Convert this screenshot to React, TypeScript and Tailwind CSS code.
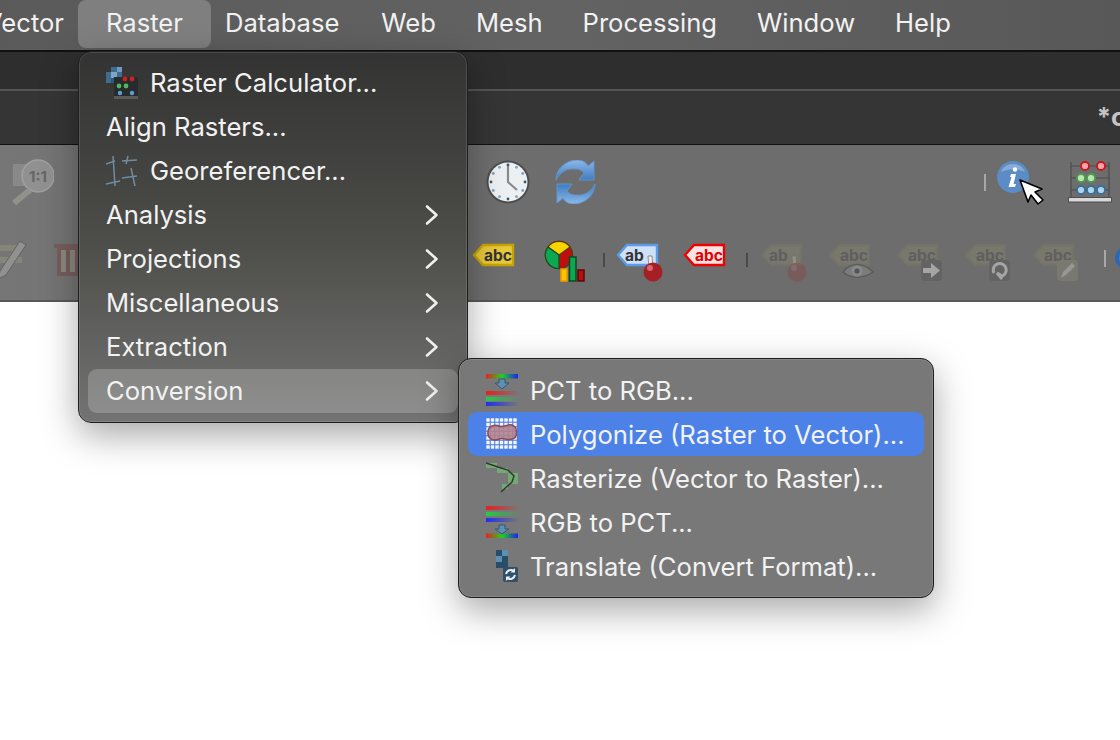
const font = { fontFamily: "Inter, sans-serif" };

const Chevron = () => (
  <svg width="14" height="22" viewBox="0 0 14 22" fill="none" className="shrink-0">
    <path d="M2 2.5 L11.5 11 L2 19.5" stroke="#f0f0f0" strokeWidth="2.6" strokeLinecap="round" strokeLinejoin="round" />
  </svg>
);

const CalcIcon = () => (
  <svg width="32" height="32" viewBox="0 0 32 32">
    <rect x="0" y="5" width="5" height="11" fill="#3f6c8f" />
    <rect x="5" y="0" width="6" height="5" fill="#3f6c8f" />
    <rect x="11" y="0" width="5" height="5" fill="#6f9cbc" />
    <rect x="5" y="5" width="6" height="6" fill="#7ba6c4" />
    <rect x="11" y="5" width="5" height="6" fill="#3f6c8f" />
    <rect x="5" y="11" width="6" height="5" fill="#2f5875" />
    <rect x="8" y="10" width="24" height="22" fill="#262b2d" />
    <rect x="8" y="29" width="24" height="3" fill="#5a5a5a" />
    <circle cx="19" cy="12" r="2.4" fill="#d11f22" />
    <circle cx="26" cy="12" r="2.4" fill="#d11f22" />
    <circle cx="13" cy="19" r="2.4" fill="#58b35a" />
    <circle cx="20" cy="19" r="2.4" fill="#58b35a" />
    <circle cx="14" cy="26" r="2.2" fill="#5c9fd6" />
    <circle cx="26" cy="26" r="2.2" fill="#5c9fd6" />
  </svg>
);

const GeorefIcon = () => (
  <svg width="32" height="32" viewBox="0 0 32 32" fill="none" stroke="#6f8da0" strokeWidth="1.5">
    <path d="M7 1 L9 31" />
    <path d="M22 1 L20 9 M25 13 L29 31" />
    <path d="M0 9 L9 6 M16 6 L31 5" />
    <path d="M0 29 L14 26 M16 23 L31 21" />
  </svg>
);

const PctIcon = ({ flip }: { flip?: boolean }) => (
  <svg width="32" height="32" viewBox="0 0 32 32">
    <defs>
      <linearGradient id="rainbow">
        <stop offset="0" stopColor="#e82020" />
        <stop offset="0.5" stopColor="#20d020" />
        <stop offset="1" stopColor="#2020f0" />
      </linearGradient>
      <linearGradient id="r"><stop offset="0" stopColor="#e82020" /><stop offset="1" stopColor="#e02020" stopOpacity="0.05" /></linearGradient>
      <linearGradient id="g"><stop offset="0" stopColor="#20d040" /><stop offset="1" stopColor="#20c040" stopOpacity="0.05" /></linearGradient>
      <linearGradient id="b"><stop offset="0" stopColor="#2030f0" /><stop offset="1" stopColor="#2030e0" stopOpacity="0.05" /></linearGradient>
    </defs>
    <rect x="0" y={flip ? 27.5 : 0} width="32" height="4.5" fill="url(#rainbow)" />
    <path
      d={flip ? "M13 19 H19 V23 H23 L16 28 L9 23 H13 Z" : "M13 5 H19 V9 H23 L16 15 L9 9 H13 Z"}
      fill="#5f8fb5"
      stroke="#34566f"
      strokeWidth="1"
    />
    <rect x="0" y={flip ? 0 : 17} width="32" height="4" fill="url(#r)" />
    <rect x="0" y={flip ? 6 : 23} width="32" height="4" fill="url(#g)" />
    <rect x="0" y={flip ? 12 : 28} width="32" height="4" fill="url(#b)" />
  </svg>
);

const PolygonizeIcon = () => (
  <svg width="32" height="32" viewBox="0 0 32 32">
    {Array.from({ length: 49 }).map((_, i) => (
      <rect key={i} x={(i % 7) * 4.5 + 0.3} y={Math.floor(i / 7) * 4.5 + 0.3} width="3.4" height="3.4" fill="#f4f6fb" />
    ))}
    <path d="M2 14 C2 8 9 6 13 8 C18 10 20 6 26 7 C32 9 32 20 26 21 C20 23 18 19 13 21 C7 24 1 20 2 14 Z" fill="#b0808a" fillOpacity="0.88" stroke="#8c4b55" strokeWidth="1.5" />
  </svg>
);

const RasterizeIcon = () => (
  <svg width="32" height="32" viewBox="0 0 32 32">
    <rect x="0" y="1" width="11" height="5" fill="#74a874" />
    <rect x="11" y="6" width="11" height="5" fill="#74a874" />
    <rect x="22" y="11" width="10" height="11" fill="#74a874" />
    <rect x="16" y="22" width="6" height="5" fill="#74a874" />
    <path d="M0 1 L12 5 L22 8 L28 14 L26 20 L15 30" fill="none" stroke="#2c3a2c" strokeWidth="1.4" />
  </svg>
);

const TranslateIcon = () => (
  <svg width="32" height="32" viewBox="0 0 32 32">
    <rect x="10" y="0" width="6" height="6" fill="#294d68" />
    <rect x="16" y="0" width="6" height="6" fill="#5f8fb0" />
    <rect x="10" y="6" width="6" height="6" fill="#5f8fb0" />
    <rect x="16" y="6" width="6" height="6" fill="#294d68" />
    <rect x="10" y="12" width="6" height="6" fill="#294d68" />
    <rect x="16" y="12" width="6" height="6" fill="#294d68" />
    <rect x="17" y="17" width="15" height="15" rx="2" fill="#2f5068" />
    <path d="M20 24 A5 5 0 0 1 28 21 M29 25 A5 5 0 0 1 21 28" stroke="#e8eef2" strokeWidth="2" fill="none" />
    <path d="M29 18 V22.5 H24.5 Z M20 31 V26.5 H24.5 Z" fill="#e8eef2" />
  </svg>
);

const LabelIcon = ({ text = "abc", w = 40, fill = "#8a8a78", border = "#7a7a6a", color = "#5a5a58", children }: { text?: string; w?: number; fill?: string; border?: string; color?: string; children?: React.ReactNode }) => (
  <svg width={w + 2} height="42" viewBox={`0 0 ${w + 2} 42`} className="overflow-visible">
    <path d={`M1 13 L10 3 H${w} V23 H10 Z`} fill={fill} stroke={border} strokeWidth="2.4" />
    <text x={text === "ab" ? 8 : (w + 10) / 2} y="18.5" fontSize="15.5" fontWeight="700" textAnchor={text === "ab" ? "start" : "middle"} fill={color} fontFamily="Inter, sans-serif">{text}</text>
    {children}
  </svg>
);

const Clock = () => (
  <svg width="44" height="44" viewBox="0 0 44 44">
    <circle cx="22" cy="22" r="21.5" fill="#4d4d4d" />
    <circle cx="22" cy="22" r="19.5" fill="#edf0f3" />
    {Array.from({ length: 12 }).map((_, i) => {
      const a = (i * Math.PI) / 6;
      return <circle key={i} cx={22 + 17 * Math.sin(a)} cy={22 - 17 * Math.cos(a)} r="1.4" fill={i % 3 === 0 ? "#39566f" : "#7aa0c4"} />;
    })}
    <path d="M22 6 V22 L31 30" fill="none" stroke="#8a8a8a" strokeWidth="2.2" />
  </svg>
);

const Refresh = () => {
  const arrow = "M1 20 C1 8 12 0 22 0 C27 0 31 2 33 6 L39 1 V20 H24 L29 13 C25 8 20 9 15 9 C9 10 4 14 1 20 Z";
  return (
    <svg width="42" height="44" viewBox="0 0 42 44">
      <defs>
        <linearGradient id="bl" x1="0" y1="0" x2="0" y2="1">
          <stop offset="0" stopColor="#8db8e6" />
          <stop offset="1" stopColor="#3f7cc0" />
        </linearGradient>
      </defs>
      <path d={arrow} fill="url(#bl)" stroke="#5e94d0" />
      <path d={arrow} transform="rotate(180 20.5 22)" fill="url(#bl)" stroke="#5e94d0" />
    </svg>
  );
};

const Zoom11 = () => (
  <svg width="44" height="46" viewBox="0 0 44 46" className="opacity-60">
    <rect x="3" y="5" width="24" height="22" fill="#969696" />
    <circle cx="28" cy="17" r="16" fill="#a3a3a3" stroke="#bdbdbd" strokeWidth="1.5" />
    <text x="28" y="22.5" fontSize="15" fontWeight="700" textAnchor="middle" fill="#5d5d5d" fontFamily="Inter, sans-serif">1:1</text>
    <path d="M20 31 L4 44" stroke="#a6a69c" strokeWidth="6" />
  </svg>
);

const Info = () => (
  <svg width="34" height="34" viewBox="0 0 34 34">
    <circle cx="17" cy="17" r="16" fill="#5c8cc6" />
    <path d="M5 12 A13 13 0 0 1 29 12 C20 8 12 9 5 12 Z" fill="#88acd9" />
    <circle cx="19" cy="9.5" r="2.2" fill="#fff" />
    <path d="M15 14 H20 L17.5 24 H20 L19 27 H12.5 L15.5 17 H14 Z" fill="#fff" />
  </svg>
);

const Abacus = () => (
  <svg width="44" height="42" viewBox="0 0 44 42">
    <path d="M3 1 V38 M41 1 V38" stroke="#4d4d4d" strokeWidth="1.2" />
    <path d="M3 5 H41 M3 17 H41 M3 29 H41" stroke="#4d4d4d" strokeWidth="1.2" />
    <rect x="0.5" y="36.5" width="43" height="4.5" fill="#d8d8d8" stroke="#4d4d4d" />
    {[17, 33].map((x) => <circle key={x} cx={x} cy="5" r="4" fill="#f4a3a6" stroke="#c8161c" strokeWidth="1.8" />)}
    {[13, 23].map((x) => <circle key={x} cx={x} cy="17" r="4" fill="#b8e6b0" stroke="#4f9d4f" strokeWidth="1.8" />)}
    {[13, 23, 33].map((x) => <circle key={x} cx={x} cy="29" r="4" fill="#aed3ee" stroke="#3a6f99" strokeWidth="1.8" />)}
  </svg>
);

const Pie = () => (
  <svg width="42" height="44" viewBox="0 0 42 44">
    <circle cx="15" cy="16" r="13.5" fill="#c00d0d" stroke="#5b3a12" strokeWidth="1.5" />
    <path d="M15 16 L4 8 A13.5 13.5 0 0 1 26 8 Z" fill="#f5d400" stroke="#5b3a12" strokeWidth="1.2" />
    <path d="M15 16 L4 8 A13.5 13.5 0 0 0 15 29.5 Z" fill="#0aa850" stroke="#1d4a1d" strokeWidth="1.2" />
    <rect x="17" y="30" width="6" height="12" fill="#ffc300" stroke="#f59b00" strokeWidth="1.5" />
    <rect x="25.5" y="18" width="6.5" height="24" fill="#0aa850" stroke="#0b4a24" strokeWidth="1.5" />
    <rect x="34" y="31" width="6" height="11" fill="#b80f0f" stroke="#5a0808" strokeWidth="1.5" />
  </svg>
);

const Sep = ({ light }: { light?: boolean }) => (
  <div className={`w-[2px] shrink-0 ${light ? "h-[17px] bg-[#a8a8a8]" : "h-[14px] mt-1 bg-[#4a4a4a]"}`} />
);

const Ball = ({ dim }: { dim?: boolean }) => (
  <g opacity={dim ? 0.3 : 1}>
    <path d="M31 14 L35 14 L36 26 L32 26 Z" fill="#eee" stroke="#555" strokeWidth="0.6" />
    <circle cx="36" cy="30" r="9.5" fill="#a51f24" />
    <circle cx="33" cy="26" r="3" fill="#d9666a" />
  </g>
);

const Eye = () => (
  <g transform="translate(12,20)" opacity="0.75">
    <path d="M2 10 C10 0 22 0 32 10 C22 17 10 17 2 10 Z" fill="#8a8a8a" stroke="#4a4a4a" strokeWidth="1.3" />
    <circle cx="16" cy="9" r="5.5" fill="#a0a4aa" />
    <circle cx="16" cy="9" r="2.6" fill="#3f3f3f" />
  </g>
);

const Badge = ({ type }: { type: "arrow" | "rotate" | "pen" }) => (
  <g transform="translate(24,18)">
    <rect width="21" height="21" rx="4" fill={type === "pen" ? "#7f7f70" : "#5f5f5f"} />
    {type === "arrow" && <path d="M2 8 H10 V3 L19 10.5 L10 18 V13 H2 Z" fill="#bdbdbd" />}
    {type === "rotate" && <path d="M5 13 A6.5 6.5 0 1 1 13 16 M13 16 L8 13 L13 19" fill="none" stroke="#bdbdbd" strokeWidth="3" />}
    {type === "pen" && <path d="M4 18 L6 12 L15 3 L18 6 L9 15 Z" fill="#aaa" />}
  </g>
);

const Row = ({ label, icon, arrow, tone, pad, drop }: { label: string; icon?: React.ReactNode; arrow?: boolean; tone?: "hover" | "active"; pad: string; drop?: string }) => (
  <div className={`h-[44px] flex items-center rounded-[9px] ${pad} ${tone === "hover" ? "bg-white/20" : ""} ${tone === "active" ? "bg-[#4c82e8]" : ""}`}>
    {icon && <span className="w-[44px] shrink-0">{icon}</span>}
    <span className={`flex-1 whitespace-nowrap ${drop ?? ""}`}>{label}</span>
    {arrow && <Chevron />}
  </div>
);

const items = [
  { label: "Vector", cls: "px-[21px]" },
  { label: "Raster", cls: "-mx-[7px] px-[28px] rounded-lg bg-[#7f7f7f]" },
  { label: "Database", cls: "px-[21px]" },
  { label: "Web", cls: "pl-[21px] pr-[19px]" },
  { label: "Mesh", cls: "pl-[21px] pr-[19px]" },
  { label: "Processing", cls: "pl-[21px] pr-[19px]" },
  { label: "Window", cls: "pl-[21px] pr-[19px]" },
  { label: "Help", cls: "px-[21px]" },
];
const mainPad = "pl-[18px] pr-[19px]";
const subPad = "pl-[18px]";
const subDrop = "pt-[2px]";

export default function App() {
  return (
    <div className="relative w-[1120px] h-[740px] overflow-hidden bg-white text-[25.6px] text-[#f2f2f2]" style={font}>
      {/* menu bar */}
      <div className="h-[50px] flex items-start overflow-hidden bg-linear-to-r from-[#5a5a5a] via-[#636363] to-[#585858]">
        <div className="flex -ml-[36px]">
          {items.map((m) => (
            <div key={m.label} className={`h-[48px] flex items-center pb-[2px] ${m.cls}`}>
              {m.label}
            </div>
          ))}
        </div>
      </div>

      {/* window title strips */}
      <div className="h-[39px] bg-[#2e2e2e] border-t-2 border-[#111]" />
      <div className="h-[56px] flex items-center justify-end overflow-hidden bg-[#353535] border-t-2 border-[#555] border-b border-b-[#111]">
        <span className="-mr-[6px] font-bold text-[#c4c4c4]">*c</span>
      </div>

      {/* toolbar */}
      <div className="h-[157px] bg-linear-to-r from-[#767676] via-[#6d6d6d] to-[#6d6d6d] border-b-2 border-[#585858]">
        <div className="h-[74px] flex items-center pl-[8px]">
          <div className="ml-[2px]"><Zoom11 /></div>
          <div className="ml-[432px]"><Clock /></div>
          <div className="ml-[25px]"><Refresh /></div>
          <div className="ml-[387px]"><Sep light /></div>
          <div className="ml-[10px] -mt-[10px]"><Info /></div>
          <div className="ml-[38px]"><Abacus /></div>
        </div>
        <div className="h-[78px] flex items-center -ml-[6px]">
          <svg width="36" height="46" viewBox="0 0 36 46" className="opacity-60 shrink-0">
            <rect x="0" y="10" width="28" height="6" fill="#8f8f7a" />
            <rect x="0" y="22" width="28" height="6" fill="#8f8f7a" />
            <path d="M6 36 L26 6 L32 10 L12 40 L4 44 Z" fill="#a3a3a3" stroke="#555" />
          </svg>
          <svg width="30" height="44" viewBox="0 0 30 44" className="ml-[23px] opacity-60 shrink-0">
            <path d="M1 8 H29 V12 H26 V40 H4 V12 H1 Z" fill="#7a4f4f" />
            <rect x="8" y="14" width="5" height="22" fill="#9a9a8a" />
            <rect x="17" y="14" width="5" height="22" fill="#9a9a8a" />
          </svg>
          <div className="ml-[390px] shrink-0 mt-[10px]">
            <LabelIcon fill="#e6c93d" border="#c9a400" color="#333" />
          </div>
          <div className="ml-[29px] shrink-0 mt-[6px]"><Pie /></div>
          <div className="ml-[17px]"><Sep /></div>
          <div className="ml-[12px] shrink-0 mt-[10px]">
            <LabelIcon text="ab" fill="#cfe0f8" border="#5a9bea" color="#333"><Ball /></LabelIcon>
          </div>
          <div className="ml-[25px] shrink-0 mt-[10px]">
            <LabelIcon fill="#fbe3e3" border="#f00000" color="#e00000" />
          </div>
          <div className="ml-[20px]"><Sep /></div>
          <div className="ml-[13px] shrink-0 mt-[10px] opacity-70">
            <LabelIcon text="ab" fill="#7d7d6e" border="#76766a"><Ball dim /></LabelIcon>
          </div>
          <div className="ml-[26px] shrink-0 mt-[10px] opacity-70">
            <LabelIcon fill="#7d7d6e" border="#76766a"><Eye /></LabelIcon>
          </div>
          <div className="ml-[26px] shrink-0 mt-[10px] opacity-70">
            <LabelIcon fill="#7d7d6e" border="#76766a"><Badge type="arrow" /></LabelIcon>
          </div>
          <div className="ml-[26px] shrink-0 mt-[10px] opacity-70">
            <LabelIcon fill="#7d7d6e" border="#76766a"><Badge type="rotate" /></LabelIcon>
          </div>
          <div className="ml-[26px] shrink-0 mt-[10px] opacity-70">
            <LabelIcon fill="#7d7d6e" border="#76766a"><Badge type="pen" /></LabelIcon>
          </div>
          <div className="ml-[29px]"><Sep light /></div>
          <div className="ml-[9px] w-[22px] h-[22px] rounded-full bg-[#3c7fd0] border-4 border-[#2f66b0] shrink-0" />
        </div>
      </div>

      {/* mouse pointer over the identify button */}
      <svg width="28" height="30" viewBox="0 0 28 30" className="absolute left-[1018px] top-[178px]">
        <path d="M2 2 L10 24 L13 17 L20 26 L25 22 L17 14 L24 11 Z" fill="#fff" stroke="#000" strokeWidth="1.6" strokeLinejoin="round" />
      </svg>

      {/* Raster menu */}
      <div className="absolute left-[78px] top-[51px] w-[390px] h-[372px] p-[9px] rounded-[13px] border border-[#1e1e1e] bg-linear-to-b from-[#333333] via-[#4c4c48] to-[#737373] shadow-[inset_0_0_0_1px_rgba(255,255,255,0.12),0_12px_36px_rgba(0,0,0,0.35)]">
        <Row pad={mainPad} label="Raster Calculator..." icon={<CalcIcon />} />
        <Row pad={mainPad} label="Align Rasters..." />
        <Row pad={mainPad} label="Georeferencer..." icon={<GeorefIcon />} />
        <Row pad={mainPad} label="Analysis" arrow />
        <Row pad={mainPad} label="Projections" arrow />
        <Row pad={mainPad} label="Miscellaneous" arrow />
        <Row pad={mainPad} label="Extraction" arrow />
        <Row pad={mainPad} label="Conversion" arrow tone="hover" />
      </div>

      {/* Conversion submenu */}
      <div className="absolute left-[458px] top-[358px] w-[476px] h-[240px] p-[9px] rounded-[13px] border border-[#1e1e1e] bg-[#787878] shadow-[inset_0_0_0_1px_rgba(255,255,255,0.12),0_12px_36px_rgba(0,0,0,0.35)]">
        <Row pad={subPad} drop={subDrop} label="PCT to RGB..." icon={<PctIcon />} />
        <Row pad={subPad} drop={subDrop} label="Polygonize (Raster to Vector)..." icon={<PolygonizeIcon />} tone="active" />
        <Row pad={subPad} drop={subDrop} label="Rasterize (Vector to Raster)..." icon={<RasterizeIcon />} />
        <Row pad={subPad} drop={subDrop} label="RGB to PCT..." icon={<PctIcon flip />} />
        <Row pad={subPad} drop={subDrop} label="Translate (Convert Format)..." icon={<TranslateIcon />} />
      </div>
    </div>
  );
}
